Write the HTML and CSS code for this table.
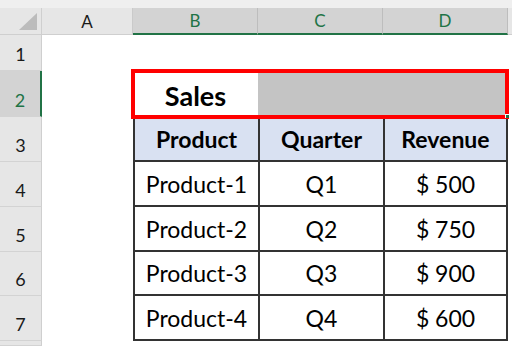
FILE: index.html
```html
<!DOCTYPE html>
<html>
<head>
<meta charset="utf-8">
<link rel="stylesheet" href="styles.css">
</head>
<body>
<div class="topstrip"></div>
<div class="sheet">
  <div class="row colheads">
    <div class="corner"><svg class="tri" width="18" height="17" viewBox="0 0 18 17"><polygon points="18,0 18,17 0,17" fill="#bcbcbc"/></svg></div>
    <div class="colhead">A</div>
    <div class="colhead sel">B</div>
    <div class="colhead sel">C</div>
    <div class="colhead sel">D</div>
    <div class="colhead rest"></div>
  </div>
  <div class="row h1">
    <div class="rowhead">1</div>
  </div>
  <div class="row h2">
    <div class="rowhead sel">2</div>
    <div class="cell"></div>
    <div class="range">
      <div class="sales">Sales</div>
      <div class="fill"></div>
      <span class="handle"></span>
    </div>
  </div>
  <div class="row h3">
    <div class="rowhead">3</div>
    <div class="cell"></div>
    <div class="tc th">Product</div>
    <div class="tc th">Quarter</div>
    <div class="tc th last">Revenue</div>
  </div>
  <div class="row h4">
    <div class="rowhead">4</div>
    <div class="cell"></div>
    <div class="tc">Product-1</div>
    <div class="tc">Q1</div>
    <div class="tc last">$ 500</div>
  </div>
  <div class="row h5">
    <div class="rowhead">5</div>
    <div class="cell"></div>
    <div class="tc">Product-2</div>
    <div class="tc">Q2</div>
    <div class="tc last">$ 750</div>
  </div>
  <div class="row h6">
    <div class="rowhead">6</div>
    <div class="cell"></div>
    <div class="tc">Product-3</div>
    <div class="tc">Q3</div>
    <div class="tc last">$ 900</div>
  </div>
  <div class="row h7">
    <div class="rowhead">7</div>
    <div class="cell"></div>
    <div class="tc">Product-4</div>
    <div class="tc">Q4</div>
    <div class="tc last">$ 600</div>
  </div>
  <div class="row h8">
    <div class="rowhead"></div>
  </div>
</div>
</body>
</html>
```

FILE: styles.css
```css
* { box-sizing: border-box; }
html, body {
  margin: 0;
  padding: 0;
  background: #ffffff;
  width: 512px;
  height: 346px;
  overflow: hidden;
  font-family: Lato, "Open Sans", sans-serif;
}
.topstrip {
  height: 8px;
  background: #efefef;
}
.sheet {
  display: flex;
  flex-direction: column;
}
.row {
  display: grid;
  grid-template-columns: 42px 91px 125px 125px 125px 1fr;
}
.colheads { height: 27px; }
.h1 { height: 36px; }
.h2 { height: 46px; }
.h3, .h4, .h5, .h7 { height: 45px; }
.h6 { height: 44px; }
.h8 { height: 5px; }

.corner {
  background: #e6e6e6;
  border-right: 1px solid #cfcfcf;
  border-bottom: 1px solid #cfcfcf;
  display: flex;
  justify-content: flex-end;
  align-items: flex-end;
  padding: 0 4px 4px 0;
}
.colhead {
  background: #e6e6e6;
  border-right: 1px solid #cacaca;
  border-bottom: 1px solid #cfcfcf;
  display: flex;
  align-items: center;
  justify-content: center;
  font-size: 17px;
  color: #1a1a1a;
}
.colhead.sel {
  background: #d3d3d3;
  color: #217346;
  border-bottom: 2px solid #217346;
  border-right-color: #bdbdbd;
}
.colhead.rest { border-right: none; }

.rowhead {
  background: #e6e6e6;
  border-right: 1px solid #cfcfcf;
  border-bottom: 1px solid #d3d3d3;
  display: flex;
  align-items: flex-end;
  justify-content: center;
  padding-bottom: 5px;
  font-size: 18px;
  color: #1a1a1a;
}
.rowhead.sel {
  background: #d3d3d3;
  color: #217346;
  border-right: 2px solid #217346;
}
.h8 .rowhead { padding: 0; }

.range {
  grid-column: span 3;
  position: relative;
  display: grid;
  grid-template-columns: 125px 1fr;
}
.range::after {
  content: "";
  position: absolute;
  top: -2px;
  left: -2px;
  right: -1px;
  bottom: -2px;
  border: 4px solid #ff0000;
  z-index: 2;
  pointer-events: none;
}
.sales {
  display: flex;
  align-items: center;
  justify-content: center;
  font-weight: bold;
  font-size: 27px;
  color: #000;
  padding-top: 2px;
}
.fill { background: #c4c4c4; }
.handle {
  position: absolute;
  right: -1px;
  bottom: -1px;
  width: 4px;
  height: 4px;
  background: #217346;
  border-left: 1px solid #fff;
  border-top: 1px solid #fff;
  z-index: 3;
}

.tc {
  border-left: 2px solid #333333;
  border-bottom: 2px solid #333333;
  display: flex;
  align-items: center;
  justify-content: center;
  font-size: 23px;
  color: #000;
}
.tc.last { border-right: 2px solid #333333; }
.th {
  background: #d9e1f2;
  font-weight: bold;
}
```
